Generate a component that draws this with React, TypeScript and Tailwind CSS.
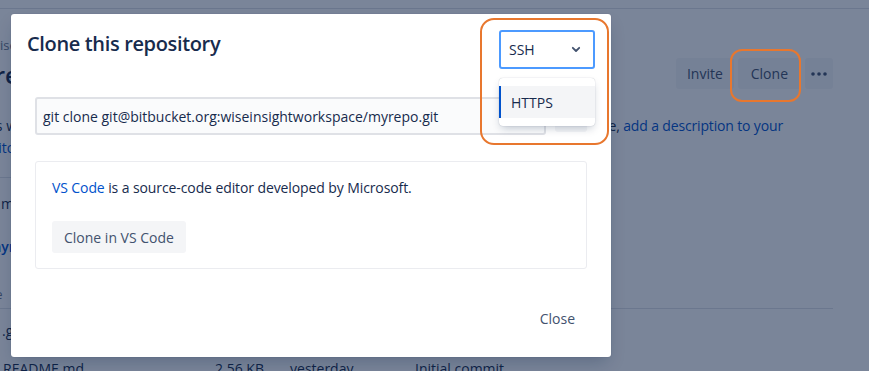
import React from "react";

function PageBehind() {
  return (
    <div className="w-[869px] h-[371px] bg-white overflow-hidden">
      <div className="h-[9px] border-b border-[#dfe1e6]" />
      <div className="ml-[-36px] w-[869px] flex flex-col">
        <div className="pt-[28px] ml-[26px] text-[13px] leading-[16px] text-[#6b778c]">wiseinsightworkspace / myrepo</div>
        <div className="mt-[2px] flex items-start justify-between">
          <div className="ml-[-5px] text-[24px] leading-[40px] font-semibold text-[#172b4d]">myrepo</div>
          <div className="flex gap-[4px] mt-[3px]">
            <div className="h-[31px] px-[11px] flex items-center rounded-[3px] bg-[rgba(9,30,66,0.04)] text-[14px] font-medium text-[#42526e]">Invite</div>
            <div className="h-[31px] px-[13px] flex items-center rounded-[3px] bg-[rgba(9,30,66,0.04)] text-[14px] font-medium text-[#42526e]">Clone</div>
            <div className="h-[31px] w-[28px] flex items-center justify-center rounded-[3px] bg-[rgba(9,30,66,0.04)] text-[#42526e]">
              <svg width="18" height="4" viewBox="0 0 18 4"><circle cx="3" cy="2" r="1.8" fill="currentColor" /><circle cx="9" cy="2" r="1.8" fill="currentColor" /><circle cx="15" cy="2" r="1.8" fill="currentColor" /></svg>
            </div>
          </div>
        </div>
        <div className="mt-[20px] ml-[-3px] text-[14px] leading-[22px] text-[#172b4d] w-[822px]">
          <div className="flex whitespace-nowrap">
            <span className="flex-1 min-w-0 overflow-hidden">Here's where you'll find this repository's source files. To give your users an idea of what they'll find her</span>
            <span className="tracking-[-0.15px]">e, <span className="text-[#0052cc]">add a description to your</span></span>
          </div>
          <div className="text-[#0052cc]">repository.</div>
        </div>
        <div className="mt-[18px] border-b border-[#dfe1e6] w-[56px] ml-[36px]" />
        <div className="mt-[16px] ml-[37px] text-[14px] leading-[20px] text-[#172b4d]">main</div>
        <div className="mt-[23px] ml-[24px] text-[14px] leading-[20px] font-semibold text-[#0052cc]">myrepo</div>
        <div className="mt-[30px] ml-[5px] text-[12px] leading-[16px] text-[#6b778c]">Name</div>
        <div className="mt-[5px] border-b border-[#dfe1e6] w-[869px]" />
        <div className="mt-[12px] ml-[38px] text-[14px] leading-[20px] text-[#172b4d]">.gitignore</div>
        <div className="mt-[18px] flex text-[14px] leading-[20px] text-[#172b4d]">
          <span className="w-[251px] pl-[39px]">README.md</span>
          <span className="w-[75px]">2.56 KB</span>
          <span className="w-[125px]">yesterday</span>
          <span>Initial commit</span>
        </div>
      </div>
    </div>
  );
}

export default function App() {
  return (
    <div className="relative w-[869px] h-[371px] overflow-hidden" style={{ fontFamily: '"Open Sans", sans-serif' }}>
      <PageBehind />
      <div className="absolute inset-0 bg-[rgba(9,30,66,0.54)]" />

      {/* annotation around background Clone button */}
      <div className="absolute left-[730px] top-[49px] w-[71px] h-[53px] rounded-[12px] border-2 border-[#e8772e]" />

      {/* modal */}
      <div className="absolute left-[11px] top-[14px] w-[600px] h-[343px] bg-white rounded-[3px] shadow-[0_0_1px_rgba(9,30,66,0.31),0_8px_16px_-4px_rgba(9,30,66,0.25)] flex flex-col">
        <div className="flex items-start justify-between pl-[16px] pr-[16px] pt-[16px]">
          <h1 className="text-[20px] leading-[28px] font-semibold text-[#172b4d] tracking-[-0.35px]">Clone this repository</h1>
          <div className="w-[96px] h-[39px] border-2 border-[#4c9aff] rounded-[3px] bg-white flex items-center justify-between pl-[8px] pr-[12px]">
            <span className="text-[14px] text-[#172b4d]">SSH</span>
            <svg width="10" height="7" viewBox="0 0 10 7" className="text-[#42526e]"><path d="M1.8 1.8 L5 5 L8.2 1.8" fill="none" stroke="currentColor" strokeWidth="1.8" strokeLinecap="round" strokeLinejoin="round" /></svg>
          </div>
        </div>

        <div className="flex items-end gap-[9px] pl-[24px] pr-[24px] mt-[28px]">
          <div className="w-[511px] h-[38px] border-2 border-[#dfe1e6] rounded-[3px] bg-[#fafbfc] flex items-center pl-[6px] text-[14px] text-[#172b4d] whitespace-nowrap overflow-hidden">
            git clone git@bitbucket.org:wiseinsightworkspace/myrepo.git
          </div>
          <div className="w-[32px] h-[32px] mb-[3px] rounded-[3px] bg-[rgba(9,30,66,0.04)]" />
        </div>

        <div className="mx-[24px] mt-[26px] h-[108px] border border-[#ebecf0] rounded-[3px] px-[16px] pt-[16px]">
          <p className="text-[14px] leading-[20px] text-[#172b4d] tracking-[-0.1px]">
            <span className="text-[#0052cc]">VS Code</span> is a source-code editor developed by Microsoft.
          </p>
          <div className="mt-[23px] inline-flex h-[32px] items-center px-[12px] rounded-[3px] bg-[#f4f5f7] text-[14px] font-medium text-[#42526e]">
            Clone in VS Code
          </div>
        </div>

        <div className="flex justify-end pr-[24px] mt-[33px]">
          <div className="h-[32px] px-[12px] flex items-center rounded-[3px] text-[14px] font-medium text-[#42526e]">Close</div>
        </div>
      </div>

      {/* dropdown menu */}
      <div className="absolute left-[499px] top-[78px] w-[96px] py-[8px] bg-white rounded-[4px] shadow-[0_0_1px_rgba(9,30,66,0.31),0_4px_8px_-2px_rgba(9,30,66,0.25)]">
        <div className="h-[32px] flex items-center pl-[10px] bg-[#f4f5f7] border-l-2 border-[#0052cc] text-[14px] text-[#172b4d]">HTTPS</div>
      </div>

      {/* annotation around select */}
      <div className="absolute left-[480px] top-[18px] w-[129px] h-[127px] rounded-[14px] border-2 border-[#e8772e]" />
    </div>
  );
}
